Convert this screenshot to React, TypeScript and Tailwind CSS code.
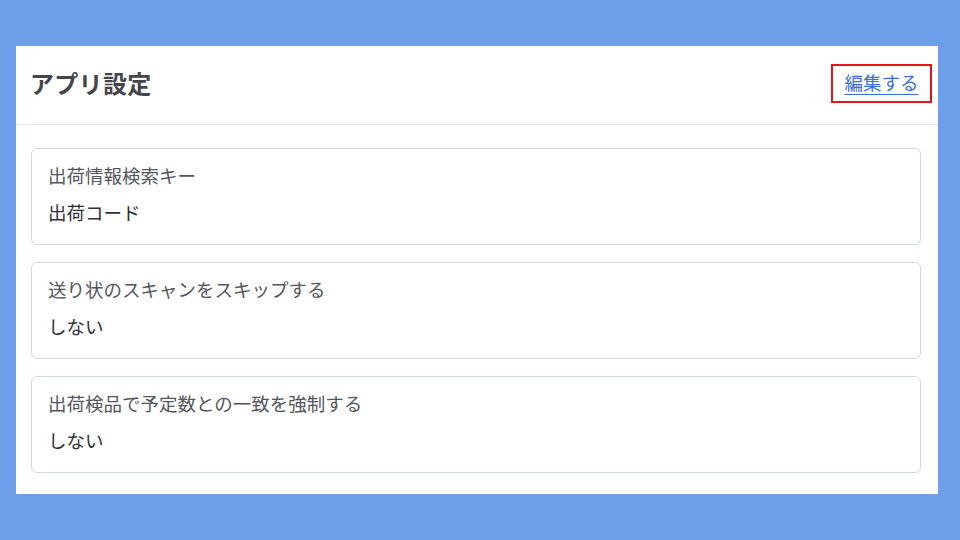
const settings = [
  {label: "出荷情報検索キー", value: "出荷コード"},
  {label: "送り状のスキャンをスキップする", value: "しない"},
  {label: "出荷検品で予定数との一致を強制する", value: "しない"},
]

function SettingCard({label, value}: {label: string; value: string}) {
  return (
    <div className="h-[97px] rounded-md border border-[#cfd8e3] px-[16px] pt-[12px]">
      <div className="text-[18.5px] leading-[28px] text-[#55555c]">{label}</div>
      <div className="mt-[9px] text-[18.5px] leading-[28px] text-[#2f2f35]">{value}</div>
    </div>
  )
}

export default function App() {
  return (
    <div
      className="w-[960px] h-[540px] bg-[#6c9eea] pt-[46px] px-[16px] pr-[22px]"
      style={{fontFamily: '"Noto Sans CJK JP", "Noto Sans", sans-serif'}}
    >
      <div className="bg-white h-[448px]">
        <div className="h-[79px] border-b border-[#e3e5e9] flex items-center justify-between pl-[14px] pr-[6px] pb-[4px]">
          <h1 className="text-[24px] font-bold text-[#45454d] tracking-[0.3px]">アプリ設定</h1>
          <div className="border-2 border-[#e8141b] h-[39px] w-[101px] flex items-center justify-center">
            <a href="#" className="text-[18.5px] text-[#3a6ee0] underline underline-offset-[4px] decoration-1">編集する</a>
          </div>
        </div>
        <div className="pl-[15px] pr-[17px] pt-[23px] flex flex-col gap-[17px]">
          {settings.map((s) => (
            <SettingCard key={s.label} label={s.label} value={s.value}/>
          ))}
        </div>
      </div>
    </div>
  )
}
